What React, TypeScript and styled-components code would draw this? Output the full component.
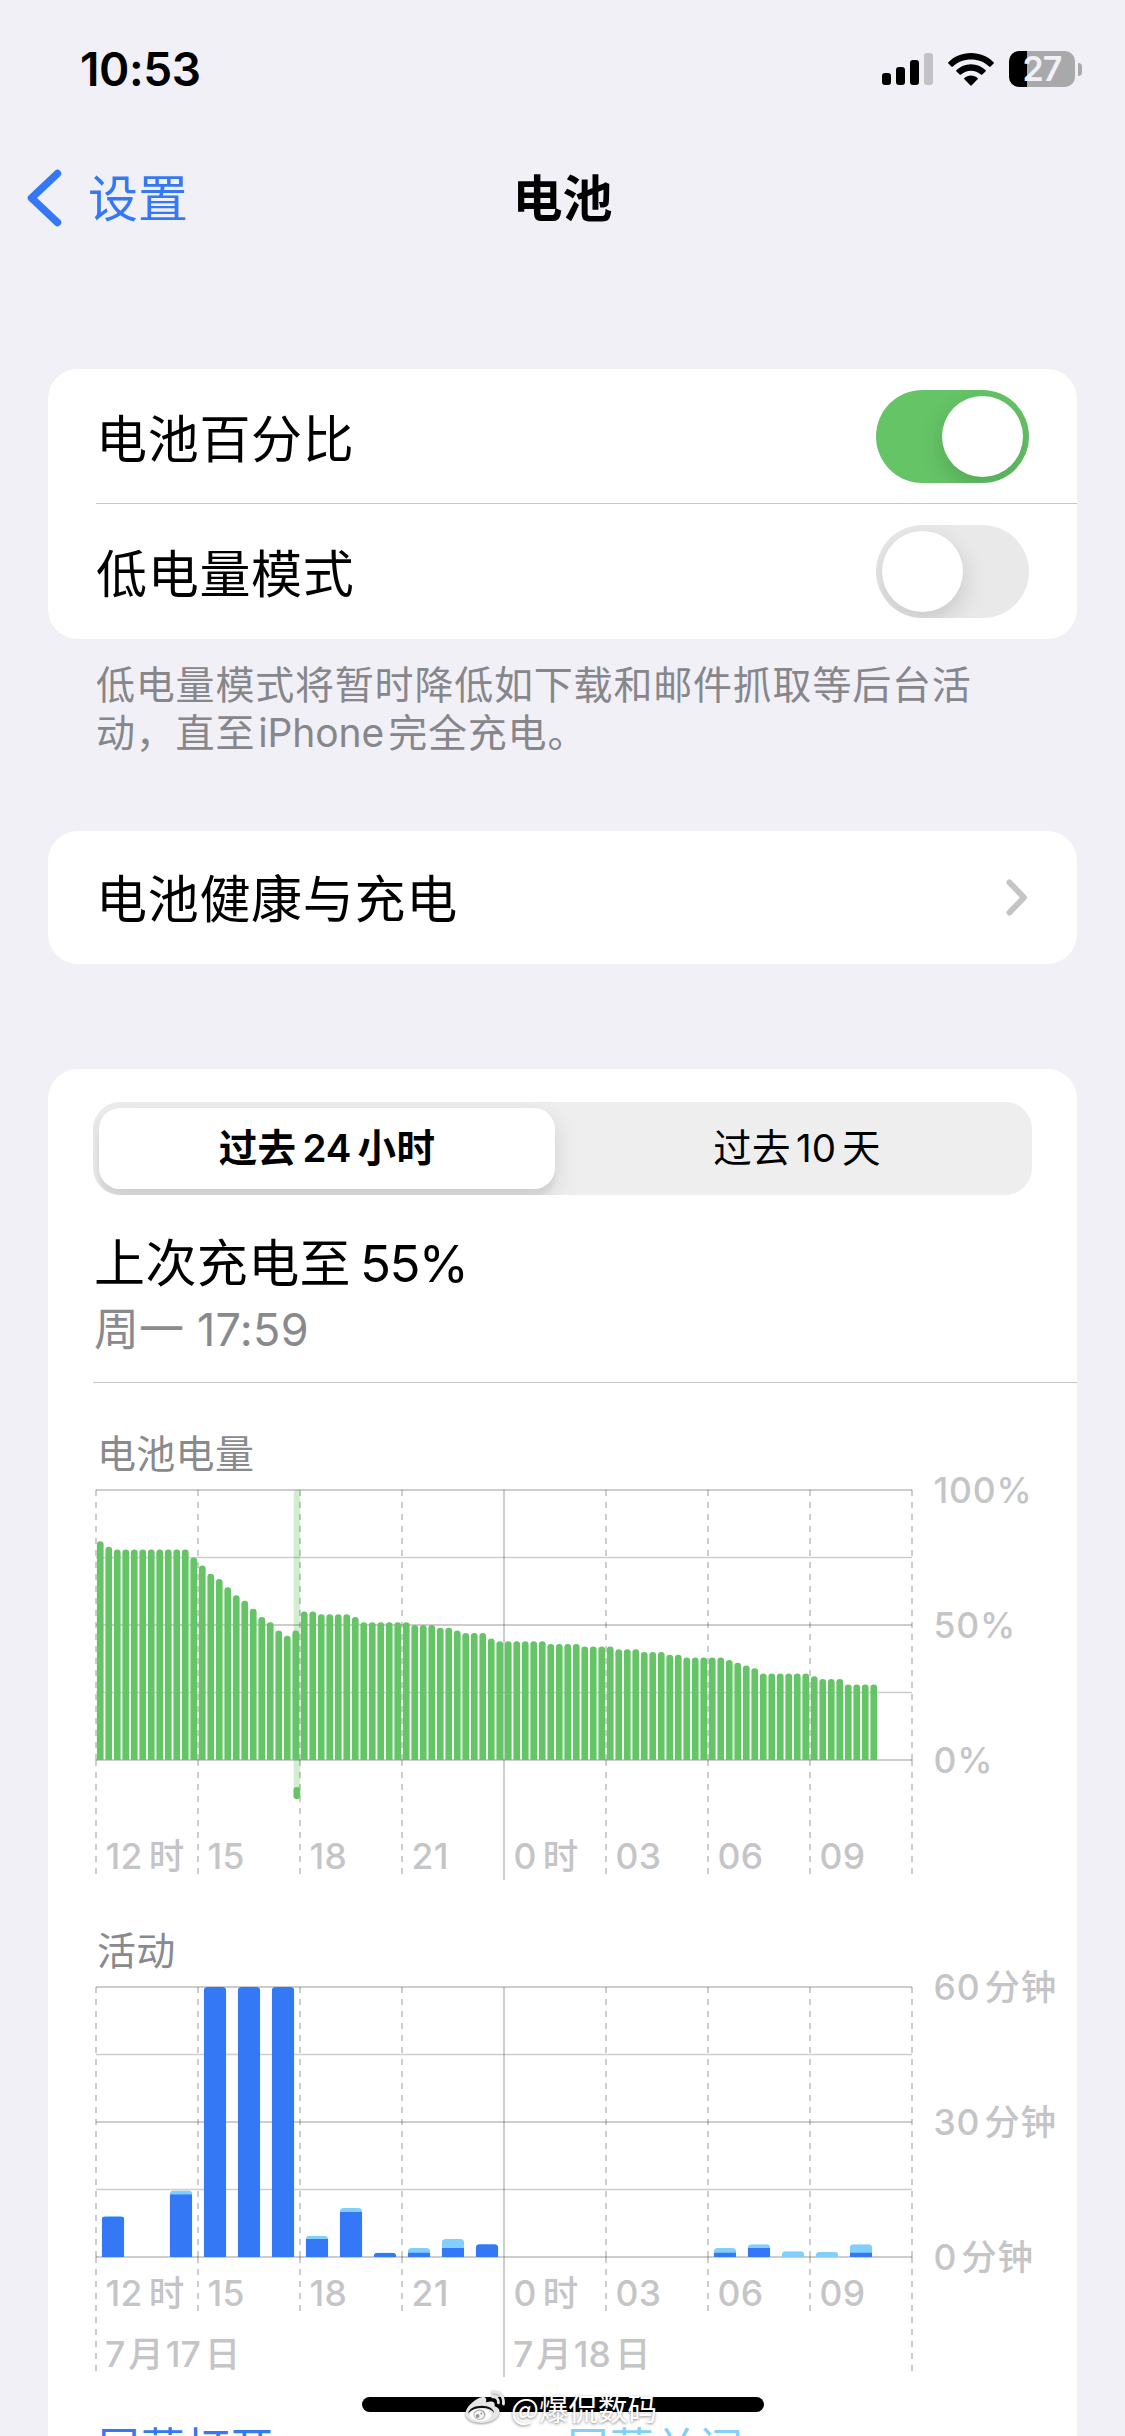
import React from "react";
import styled, { createGlobalStyle } from "styled-components";

const BLUE = "#3478f6";
const SKY = "#83cffc";
const GREEN = "#65c466";
const LABEL = "#c5c5c7";
const GRID = "rgba(60, 60, 67, 0.26)";
const FONT = `Inter, "Noto Sans CJK SC", sans-serif`;

const GlobalStyle = createGlobalStyle`
  body {
    margin: 0;
    background: #f1f0f6;
    font-family: ${FONT};
    color: #000;
    overflow: hidden;
  }
`;

const Screen = styled.div`
  position: relative;
  width: 1125px;
  height: 2436px;
  overflow: hidden;
  display: flex;
  flex-direction: column;
  background: #f1f0f6;
`;

const StatusBar = styled.header`
  flex: none;
  display: flex;
  align-items: center;
  justify-content: space-between;
  height: 138px;
  padding: 0 43px 0 80px;
`;

const Clock = styled.span`
  font-size: 46px;
  line-height: 60px;
  font-weight: 600;
  letter-spacing: -0.4px;
`;

const StatusIcons = styled.div`
  display: flex;
  align-items: center;
  gap: 15px;
`;

const Battery = styled.div`
  display: flex;
  align-items: center;
  gap: 3px;
`;

const BatteryCell = styled.div<{ $level: number }>`
  width: 66px;
  height: 36px;
  box-sizing: border-box;
  border-radius: 10px;
  background: linear-gradient(90deg, #000 ${(p) => p.$level}%, #a9a9ab ${(p) => p.$level}%);
  color: #f1f0f6;
  font-size: 34px;
  line-height: 36px;
  font-weight: 600;
  letter-spacing: -1px;
  text-align: center;
`;

const BatteryCap = styled.div`
  width: 4px;
  height: 13px;
  border-radius: 0 5px 5px 0;
  background: #a9a9ab;
`;

const NavBar = styled.nav`
  flex: none;
  display: grid;
  grid-template-columns: 1fr auto 1fr;
  align-items: center;
  height: 120px;
  padding: 0 27px;
`;

const BackLink = styled.a`
  display: flex;
  align-items: center;
  gap: 25px;
  color: ${BLUE};
  font-size: 50px;
  line-height: 64px;
`;

const BackText = styled.span`
  padding-top: 2px;
`;

const NavTitle = styled.h1`
  margin: 0;
  padding-top: 1px;
  font-size: 50px;
  line-height: 64px;
  font-weight: 600;
`;

const Content = styled.main`
  flex: 1;
  display: flex;
  flex-direction: column;
  padding: 111px 48px 0;
`;

const Card = styled.section<{ $gap?: number }>`
  flex: none;
  margin-top: ${(p) => p.$gap ?? 0}px;
  border-radius: 30px;
  background: #fff;
  overflow: hidden;
`;

const Row = styled.div<{ $height: number }>`
  display: flex;
  align-items: center;
  justify-content: space-between;
  height: ${(p) => p.$height}px;
  padding: 0 48px;
`;

const RowLabel = styled.span<{ $drop: number }>`
  padding-top: ${(p) => p.$drop}px;
  font-size: 51px;
  line-height: 64px;
  letter-spacing: 0.7px;
`;

const Divider = styled.div<{ $inset: number }>`
  flex: none;
  height: 1px;
  margin-left: ${(p) => p.$inset}px;
  background: #c6c6c8;
`;

const Track = styled.div<{ $on?: boolean }>`
  display: flex;
  justify-content: ${(p) => (p.$on ? "flex-end" : "flex-start")};
  width: 153px;
  height: 93px;
  box-sizing: border-box;
  padding: 6px;
  border-radius: 47px;
  background: ${(p) => (p.$on ? GREEN : "#e9e9ea")};
  overflow: hidden;
`;

const Knob = styled.div`
  width: 81px;
  height: 81px;
  border-radius: 50%;
  background: #fff;
  box-shadow: 0 9px 24px rgba(0, 0, 0, 0.15);
`;

const Note = styled.p`
  margin: 22px 0 0;
  padding: 0 48px;
  color: #86868b;
  font-size: 39px;
  line-height: 48px;
  letter-spacing: 0.8px;
  white-space: nowrap;
`;

const UsageCard = styled(Card)`
  flex: 1 0 0;
  min-height: 0;
  display: flex;
  flex-direction: column;
  padding-left: 45px;
  border-radius: 30px 30px 0 0;
`;

const Segments = styled.div`
  flex: none;
  display: flex;
  width: 939px;
  height: 93px;
  margin-top: 33px;
  box-sizing: border-box;
  padding: 6px;
  border-radius: 27px;
  background: #eeeeee;
  overflow: hidden;
`;

const Segment = styled.div<{ $active?: boolean }>`
  flex: ${(p) => (p.$active ? "0 0 456px" : "1")};
  box-sizing: border-box;
  padding-left: ${(p) => (p.$active ? 0 : 13)}px;
  border-radius: 21px;
  font-size: 38.5px;
  line-height: 80px;
  letter-spacing: 0.4px;
  text-align: center;
  font-weight: ${(p) => (p.$active ? 600 : 400)};
  background: ${(p) => (p.$active ? "#fff" : "transparent")};
  box-shadow: ${(p) => (p.$active ? "0 9px 24px rgba(0,0,0,.12), 0 9px 3px rgba(0,0,0,.04)" : "none")};
`;

const Num = styled.span<{ $l?: number; $r?: number; $track?: number }>`
  margin-left: ${(p) => p.$l ?? 0}px;
  margin-right: ${(p) => p.$r ?? 0}px;
  letter-spacing: ${(p) => p.$track ?? 0}px;
`;

const LastCharge = styled.h2`
  margin: 37px 0 0 1px;
  font-size: 51px;
  line-height: 64px;
  font-weight: 400;
  letter-spacing: 0.4px;
`;

const LastChargeTime = styled.div`
  margin: 6px 0 24px 1px;
  color: #8a8a8e;
  font-size: 45px;
  line-height: 56px;
`;

const ChartTitle = styled.h3<{ $gap: number }>`
  margin: ${(p) => p.$gap}px 0 0 4px;
  color: #8a8a8e;
  font-size: 39px;
  line-height: 48px;
  font-weight: 400;
  letter-spacing: 0.3px;
`;

const ChartSvg = styled.svg`
  flex: none;
  display: block;
  overflow: visible;
  font-family: ${FONT};
  font-size: 35.5px;
  font-weight: 500;
`;

const Legend = styled.div`
  flex: none;
  display: grid;
  grid-template-columns: 469px 1fr;
  margin-top: 39px;
  padding-left: 3px;
  font-size: 44.5px;
  line-height: 60px;
`;

const LegendItem = styled.span<{ $color: string }>`
  color: ${(p) => p.$color};
`;

const HomeIndicator = styled.div`
  position: absolute;
  left: 362px;
  top: 2397px;
  width: 402px;
  height: 15px;
  border-radius: 8px;
  background: #000;
`;

const Watermark = styled.div`
  position: absolute;
  left: 464px;
  top: 2389px;
  display: flex;
  align-items: center;
  gap: 4px;
  color: #fff;
  font-family: "Noto Sans CJK SC", sans-serif;
  font-size: 29.5px;
  line-height: 36px;
  text-shadow: 0 1px 3px rgba(0, 0, 0, 0.5);
  svg {
    filter: drop-shadow(0 1px 1px rgba(0, 0, 0, 0.4));
  }
`;

/* ---------- icons ---------- */

const Signal = () => (
  <svg width="51" height="32" viewBox="0 0 51 32">
    <rect x="0" y="20" width="9" height="12" rx="3" />
    <rect x="14" y="14" width="9" height="18" rx="3" />
    <rect x="28" y="7" width="9" height="25" rx="3" />
    <rect x="42" y="0" width="9" height="32" rx="3" fill="#c2c1c6" />
  </svg>
);

const Wifi = () => (
  <svg width="46" height="33" viewBox="0 0 46 33">
    <path d="M23 0C14 0 6 3.500 0.400 9.200Q-0.200 9.900 0.400 10.600L3.400 13.600Q4.100 14.300 4.800 13.600C9.600 9 16 6.600 23 6.600S36.400 9 41.200 13.600Q41.900 14.300 42.600 13.600L45.600 10.600Q46.200 9.900 45.600 9.200C40 3.500 32 0 23 0Z" />
    <path d="M23 11.200C17.300 11.200 12.300 13.400 8.500 17Q7.800 17.700 8.500 18.400L11.700 21.500Q12.400 22.100 13.100 21.500C15.800 19.200 19.200 17.800 23 17.800S30.200 19.200 32.900 21.500Q33.600 22.100 34.300 21.500L37.500 18.400Q38.200 17.700 37.500 17C33.700 13.400 28.700 11.200 23 11.200Z" />
    <path d="M23 22.500C20.500 22.500 18.200 23.400 16.400 24.900Q15.700 25.600 16.400 26.300L22.300 32.300Q23 33 23.700 32.300L29.600 26.300Q30.300 25.600 29.600 24.900C27.800 23.400 25.500 22.500 23 22.500Z" />
  </svg>
);

const BackChevron = () => (
  <svg width="36" height="58" viewBox="0 0 36 58" fill="none" stroke={BLUE} strokeWidth="7.500" strokeLinecap="round" strokeLinejoin="round">
    <path d="M30.500 4.500L4.500 29L30.500 53.500" />
  </svg>
);

const Disclosure = () => (
  <svg width="23" height="38" viewBox="0 0 23 38" fill="none" stroke="#c5c5c7" strokeWidth="6" strokeLinecap="round" strokeLinejoin="round">
    <path d="M3.500 3.500L18 18.500L3.500 33.500" />
  </svg>
);

const WeiboMark = () => (
  <svg width="43" height="36" viewBox="0 0 43 36">
    <path fill="#e6e6e6" d="M18.500 8C11 9.500 1.500 18 1.500 24.500C1.500 30.500 9 34 17 34C27.500 34 35.500 28.500 35.500 22.500C35.500 19.500 33 18 30.500 17.200C31.500 13.500 29 11 22 13.500C23 9.500 21.500 7.500 18.500 8Z" />
    <path fill="#111" d="M4 24.500C5 19.500 11 16.800 17.500 16.800C25 16.800 30 20 30 24C28 20.500 23 18.800 17.500 19C11 19.200 6.500 21.500 4 24.500Z" />
    <ellipse cx="16.500" cy="25.800" rx="11" ry="6.400" fill="#fff" />
    <ellipse cx="15.500" cy="25.600" rx="6" ry="5.200" fill="#aaa" />
    <ellipse cx="15.200" cy="25.900" rx="4.900" ry="4.200" fill="#f5f5f5" />
    <circle cx="13.600" cy="27" r="1.900" fill="#999" />
    <circle cx="17.400" cy="24.500" r="1" fill="#999" />
    <path d="M28.500 8Q34.500 7.500 34.500 14" fill="none" stroke="#e6e6e6" strokeWidth="2.600" strokeLinecap="round" />
    <path d="M28.500 3Q40 2.500 39.500 15" fill="none" stroke="#e6e6e6" strokeWidth="2.800" strokeLinecap="round" />
  </svg>
);

/* ---------- charts ---------- */

const LEFT = 3;
const STEP = 102;
const PLOT_W = STEP * 8;
const PLOT_H = 270;

const rep = (value: number, count: number): number[] => Array(count).fill(value);

const levels: number[] = [
  81, 79, ...rep(78, 9), 75, 72, 69, 67, 64, 61, 59, 56, 53, 51, 48, 46, 48,
  55, 55, ...rep(54, 4), 53, ...rep(51, 6), ...rep(50, 3), 49, 49, 48, ...rep(47, 3), 45,
  ...rep(44, 6), ...rep(43, 4), ...rep(42, 4), ...rep(41, 3), ...rep(40, 3), 39, 39,
  ...rep(38, 5), 37, 36, 35, 34, ...rep(32, 6), 31, ...rep(30, 3), ...rep(28, 4),
];

/* hour slot, minutes with the screen on, total minutes */
const activity: [number, number, number][] = [
  [0, 8.9, 9.1], [2, 13.9, 14.8], [3, 60, 60], [4, 60, 60], [5, 60, 60],
  [6, 4, 4.7], [7, 10, 10.9], [8, 0.95, 0.95], [9, 0.95, 2], [10, 2, 4], [11, 2.85, 2.85],
  [18, 0.95, 2], [19, 2, 2.85], [20, 0, 1.3], [21, 0, 1.15], [22, 0.95, 2.85],
];

const hours: [string, boolean][] = [
  ["12", true], ["15", false], ["18", false], ["21", false],
  ["0", true], ["03", false], ["06", false], ["09", false],
];

const capRadius = (x: number, y: number, w: number, h: number, r: number) => {
  const k = Math.min(r, h);
  return `M${x} ${y + h}V${y + k}Q${x} ${y} ${x + k} ${y}H${x + w - k}Q${x + w} ${y} ${x + w} ${y + k}V${y + h}Z`;
};

const Grid = ({ top, tail, edgeTail, midTail }: { top: number; tail: number; edgeTail: number; midTail: number }) => (
  <g stroke={GRID} fill="none">
    {[0, 1, 2, 3, 4].map((i) => {
      const thin = i % 2 === 1;
      const y = top + (PLOT_H / 4) * i;
      return <path key={i} d={`M${LEFT} ${y}H${LEFT + PLOT_W}`} strokeWidth={thin ? 1.4 : 2} />;
    })}
    {[0, 1, 2, 3, 4, 5, 6, 7, 8].map((i) => {
      const x = LEFT + STEP * i;
      const end = i === 4 ? midTail : i === 0 || i === 8 ? edgeTail : tail;
      /* the dash pattern restarts at the baseline */
      return (
        <path
          key={i}
          d={`M${x} ${top}v${PLOT_H}M${x} ${top + PLOT_H}v${end}`}
          strokeWidth="2"
          strokeDasharray={i === 4 ? undefined : "6 6"}
        />
      );
    })}
  </g>
);

const HourLabels = ({ y }: { y: number }) => (
  <g fill={LABEL}>
    {hours.map(([text, suffix], i) => (
      <text key={text} x={LEFT + STEP * i + 9.5} y={y} letterSpacing="0.3">
        {text}
        {suffix && <tspan dx="6">时</tspan>}
      </text>
    ))}
  </g>
);

const AxisLabel = ({ y, value, unit }: { y: number; value: string; unit?: string }) => (
  <text x="840.500" y={y} fill={LABEL} letterSpacing="0.8">
    {value}
    {unit && <tspan dx="4" letterSpacing="0.8">{unit}</tspan>}
  </text>
);

const DateLabel = ({ x, day }: { x: number; day: string }) => (
  <text x={x} y="392" fill={LABEL}>
    7<tspan dx="3">月</tspan>
    <tspan dx="2">{day}</tspan>
    <tspan dx="4">日</tspan>
  </text>
);

const LevelChart = () => {
  const top = 12;
  const base = top + PLOT_H;
  return (
    <ChartSvg width="984" height="404" viewBox="0 0 984 404">
      <rect x="200.700" y={top} width="6.500" height="309" rx="3" fill="#d1eed1" />
      <Grid top={top} tail={114} edgeTail={114} midTail={120} />
      <g fill={GREEN}>
        {levels.map((v, i) => (
          <path key={i} d={capRadius(LEFT + 0.9 + i * 8.5, base - v * 2.7, 6.700, v * 2.7, 3.3)} />
        ))}
        <rect x="200.500" y="309" width="6.700" height="12" rx="3" />
      </g>
      <AxisLabel y={25} value="100%" />
      <AxisLabel y={160} value="50%" />
      <AxisLabel y={295} value="0%" />
      <HourLabels y={391} />
    </ChartSvg>
  );
};

const ActivityChart = () => {
  const top = 12;
  const base = top + PLOT_H;
  return (
    <ChartSvg width="984" height="405" viewBox="0 0 984 405">
      <Grid top={top} tail={54} edgeTail={114} midTail={120} />
      {activity.map(([slot, on, total]) => {
        const x = LEFT + slot * 34 + 5.8;
        const h = total * 4.5;
        const clip = `bar-${slot}`;
        return (
          <g key={slot}>
            <clipPath id={clip}>
              <path d={capRadius(x, base - h, 22.400, h, 4)} />
            </clipPath>
            <g clipPath={`url(#${clip})`}>
              <rect x={x} y={base - h} width="22.400" height={h} fill={SKY} />
              <rect x={x} y={base - on * 4.5} width="22.400" height={on * 4.5} fill={BLUE} />
            </g>
          </g>
        );
      })}
      <AxisLabel y={25} value="60" unit="分钟" />
      <AxisLabel y={160} value="30" unit="分钟" />
      <AxisLabel y={295} value="0" unit="分钟" />
      <HourLabels y={331} />
      <DateLabel x={LEFT + 9} day="17" />
      <DateLabel x={LEFT + STEP * 4 + 9} day="18" />
    </ChartSvg>
  );
};

export default function App() {
  return (
    <Screen>
      <GlobalStyle />
      <StatusBar>
        <Clock>10:53</Clock>
        <StatusIcons>
          <Signal />
          <Wifi />
          <Battery>
            <BatteryCell $level={27}>27</BatteryCell>
            <BatteryCap />
          </Battery>
        </StatusIcons>
      </StatusBar>
      <NavBar>
        <BackLink>
          <BackChevron />
          <BackText>设置</BackText>
        </BackLink>
        <NavTitle>电池</NavTitle>
      </NavBar>
      <Content>
        <Card>
          <Row $height={134}>
            <RowLabel $drop={8}>电池百分比</RowLabel>
            <Track $on>
              <Knob />
            </Track>
          </Row>
          <Divider $inset={48} />
          <Row $height={135}>
            <RowLabel $drop={7}>低电量模式</RowLabel>
            <Track>
              <Knob />
            </Track>
          </Row>
        </Card>
        <Note>
          低电量模式将暂时降低如下载和邮件抓取等后台活
          <br />
          动，直至<Num $l={3} $r={4} $track={-0.1}>iPhone</Num>完全充电。
        </Note>
        <Card $gap={74}>
          <Row $height={133}>
            <RowLabel $drop={5}>电池健康与充电</RowLabel>
            <Disclosure />
          </Row>
        </Card>
        <UsageCard $gap={105}>
          <Segments>
            <Segment $active>
              过去<Num $l={6} $r={6}>24</Num>小时
            </Segment>
            <Segment>
              过去<Num $l={5} $r={6}>10</Num>天
            </Segment>
          </Segments>
          <LastCharge>
            上次充电至<Num $l={9} $track={-1.6}>55%</Num>
          </LastCharge>
          <LastChargeTime>
            周一<Num $track={0.3}> 17:59</Num>
          </LastChargeTime>
          <Divider $inset={0} />
          <ChartTitle $gap={47}>电池电量</ChartTitle>
          <LevelChart />
          <ChartTitle $gap={45}>活动</ChartTitle>
          <ActivityChart />
          <Legend>
            <LegendItem $color={BLUE}>屏幕打开</LegendItem>
            <LegendItem $color={SKY}>屏幕关闭</LegendItem>
          </Legend>
        </UsageCard>
      </Content>
      <HomeIndicator />
      <Watermark>
        <WeiboMark />
        @爆侃数码
      </Watermark>
    </Screen>
  );
}
